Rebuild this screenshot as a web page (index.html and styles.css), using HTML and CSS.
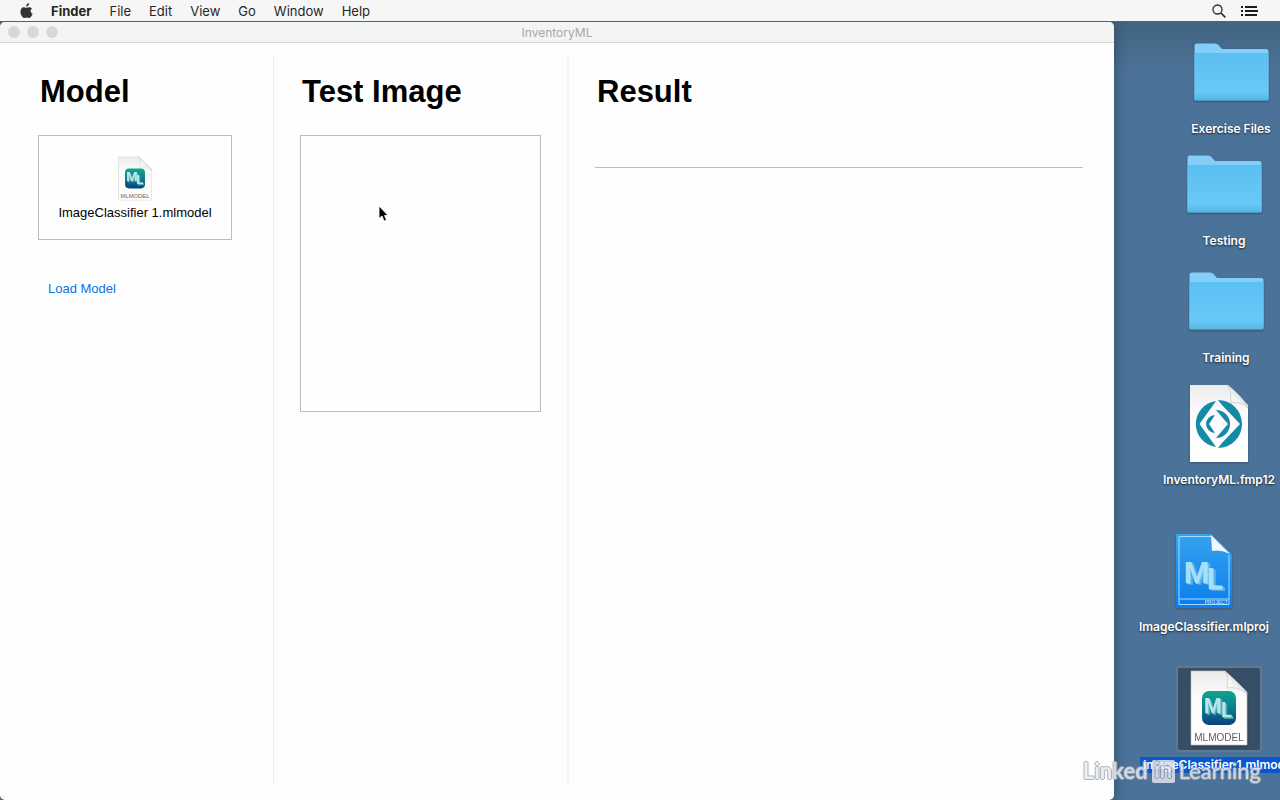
FILE: index.html
```
<!DOCTYPE html>
<html lang="en">
<head>
  <meta charset="UTF-8" />
  <meta name="viewport" content="width=device-width, initial-scale=1" />
  <title>InventoryML</title>

  <link rel="stylesheet" href="styles.css">
</head>
<body>

  <!-- Shared icon shapes -->
  <svg class="defs" width="0" height="0" aria-hidden="true">
    <defs>
      <linearGradient id="folder-front" x1="0" y1="0" x2="0" y2="1">
        <stop offset="0" stop-color="#5abff2" />
        <stop offset="0.8" stop-color="#68c9f8" />
        <stop offset="1" stop-color="#55b4de" />
      </linearGradient>
      <linearGradient id="paper" x1="0" y1="0" x2="0" y2="1">
        <stop offset="0" stop-color="#ececec" />
        <stop offset="0.35" stop-color="#fbfbfb" />
        <stop offset="1" stop-color="#ffffff" />
      </linearGradient>
      <linearGradient id="fold" x1="0" y1="1" x2="1" y2="0">
        <stop offset="0" stop-color="#ffffff" />
        <stop offset="0.4" stop-color="#f4f4f4" />
        <stop offset="0.7" stop-color="#cdd0d2" />
        <stop offset="1" stop-color="#f4f4f4" />
      </linearGradient>
      <linearGradient id="tile" x1="0" y1="0" x2="0" y2="1">
        <stop offset="0" stop-color="#10a58c" />
        <stop offset="0.5" stop-color="#0b7f91" />
        <stop offset="1" stop-color="#0b3f7c" />
      </linearGradient>
      <linearGradient id="project" x1="0" y1="0" x2="0" y2="1">
        <stop offset="0" stop-color="#36a3ee" />
        <stop offset="1" stop-color="#0a7df0" />
      </linearGradient>
    </defs>

    <symbol id="icon-folder" viewBox="0 0 75 60">
      <path d="M0.500 3Q0.500 0.500 3 0.500H21Q23 0.500 24.500 2L28 6H72Q74.500 6 74.500 8.500V56H0.500Z" fill="#83cffa" />
      <path d="M0.500 11Q0.500 10 2 10H73Q74.500 10 74.500 11V56.500Q74.500 58 73 58H2Q0.500 58 0.500 56.500Z" fill="url(#folder-front)" />
      <path d="M1 57.500H74" stroke="#4794bd" />
    </symbol>

    <symbol id="icon-page" viewBox="0 0 58 76">
      <path d="M1 1H35L57 22V75H1Z" fill="url(#paper)" stroke="#bfc3c6" stroke-width="0.700" />
      <path d="M35 1Q39 8 37 18Q48 16 57 24Q55 19 47 12Q41 6 35 1Z" fill="url(#fold)" stroke="#b4b7ba" stroke-width="0.500" />
      <rect x="12" y="21" width="34" height="34" rx="7" fill="url(#tile)" />
    </symbol>
  </svg>

  <!-- Menu bar -->
  <header class="menubar">
    <nav class="menus" aria-label="Menu bar">
      <button class="menu" aria-label="Apple menu">
        <svg width="13" height="16" viewBox="0 0 13 16">
          <path fill="#333" d="M9 0Q9.200 1.500 8.300 2.600Q7.400 3.700 6.200 3.600Q6 2.300 6.900 1.200Q7.700 0.200 9 0ZM12 5.400Q10.500 6.400 10.600 8.100Q10.700 10.100 12.600 10.900Q12.100 12.300 11.200 13.600Q10.300 15 9.200 15Q8.600 15 7.900 14.700Q6.700 14.200 5.500 14.700Q4.800 15 4.200 15Q3 15 1.700 12.900Q0.400 10.800 0.400 8.600Q0.400 6.600 1.400 5.400Q2.300 4.200 3.800 4.200Q4.500 4.200 5.300 4.500Q6.500 5 7.400 4.600Q8.400 4.200 9.200 4.200Q11 4.200 12 5.400Z" />
        </svg>
      </button>
      <button class="menu menu-app">Finder</button>
      <button class="menu">File</button>
      <button class="menu">Edit</button>
      <button class="menu">View</button>
      <button class="menu">Go</button>
      <button class="menu">Window</button>
      <button class="menu">Help</button>
    </nav>
    <div class="status">
      <button class="menu" aria-label="Search">
        <svg width="14" height="14" viewBox="0 0 14 14" fill="none" stroke="#2b2b2b" stroke-width="1.300">
          <circle cx="5.500" cy="5.500" r="4.500" />
          <path d="M9 9L13.300 13.300" stroke-width="1.700" />
        </svg>
      </button>
      <button class="menu" aria-label="Notifications">
        <svg width="17" height="12" viewBox="0 0 17 12" stroke="#1c1c1c" stroke-width="1.800">
          <path d="M0 2H2M4 2H16M0 6H2M4 6H17M0 10H2M4 10H16" />
        </svg>
      </button>
    </div>
  </header>

  <main class="desktop">

    <!-- App window -->
    <section class="window" aria-label="InventoryML">
      <div class="titlebar">
        <div class="lights"><span></span><span></span><span></span></div>
        <div class="title">InventoryML</div>
      </div>

      <div class="panels">
        <div class="panel panel-model">
          <h2>Model</h2>
          <div class="well model-well">
            <svg width="34" height="45" viewBox="0 0 58 76" aria-hidden="true">
              <use href="#icon-page" />
              <text class="ml-mark" x="14" y="43" font-size="22">M</text>
              <text class="ml-mark" x="31" y="47" font-size="22">L</text>
              <text class="doc-type" x="29" y="71" font-size="10" text-anchor="middle">MLMODEL</text>
            </svg>
            <span>ImageClassifier 1.mlmodel</span>
          </div>
          <button class="load">Load Model</button>
        </div>

        <div class="panel panel-test">
          <h2>Test Image</h2>
          <div class="well image-well"></div>
        </div>

        <div class="panel panel-result">
          <h2><label for="result">Result</label></h2>
          <input id="result" class="result" type="text" />
        </div>
      </div>
    </section>

    <!-- Desktop items -->
    <div class="item exercise">
      <div class="pic"><svg width="75" height="60"><use href="#icon-folder" /></svg></div>
      <span class="name">Exercise Files</span>
    </div>
    <div class="item testing">
      <div class="pic"><svg width="75" height="60"><use href="#icon-folder" /></svg></div>
      <span class="name">Testing</span>
    </div>
    <div class="item training">
      <div class="pic"><svg width="75" height="60"><use href="#icon-folder" /></svg></div>
      <span class="name">Training</span>
    </div>
    <div class="item inventory">
      <div class="pic">
        <svg width="60" height="78" viewBox="0 0 60 78">
          <path d="M1 0H39L59 20V77H1Z" fill="url(#paper)" />
          <path d="M39 0Q43 8 42 18Q52 16 59 23Q57 17 50 10Q44 4 39 0Z" fill="url(#fold)" stroke="#a9b1b6" stroke-width="0.500" />
          <g fill="#1489a8">
            <path d="M27 17A23.200 23.200 0 0 0 27 63L10.500 40Z" transform="translate(0 -1)" />
            <path d="M27 17L10.500 40L27 57L27 63Z" fill="none" />
            <path d="M29 15A24 24 0 0 1 29 63L33 58L51 39L33 20Z" />
            <path d="M27 25A14 14 0 0 1 27 53L39 39Z" />
            <path d="M26 30A9 9 0 0 0 26 48L20 39Z" />
          </g>
        </svg>
      </div>
      <span class="name">InventoryML.fmp12</span>
    </div>
    <div class="item project">
      <div class="pic">
        <svg width="58" height="76" viewBox="0 0 58 76">
          <path d="M1 1H36L57 21V75H1Z" fill="url(#project)" />
          <path d="M4 3.500H36M54 22V71.500H4V3.500M4 66H54" fill="none" stroke="#a6dcff" />
          <path d="M36 2L55 21Q46 16 37 18Z" fill="#f2f7fa" />
          <text class="ml-mark blue" x="9" y="50" font-size="29">M</text>
          <text class="ml-mark blue" x="32" y="56" font-size="29">L</text>
          <text class="project-type" x="53" y="71" font-size="5" text-anchor="end">PROJECT</text>
        </svg>
      </div>
      <span class="name">ImageClassifier.mlproj</span>
    </div>
    <div class="item model selected">
      <div class="pic">
        <svg width="58" height="76" viewBox="0 0 58 76">
          <use href="#icon-page" />
          <text class="ml-mark" x="14" y="43" font-size="20">M</text>
          <text class="ml-mark" x="31" y="47" font-size="20">L</text>
          <text class="doc-type" x="29" y="71" font-size="10" text-anchor="middle">MLMODEL</text>
        </svg>
      </div>
      <span class="name">ImageClassifier 1.mlmodel</span>
    </div>

    <!-- Watermark -->
    <div class="watermark">
      <span class="brand">Linked</span><span class="in">in</span><span>Learning</span>
    </div>
  </main>

  <!-- Mouse pointer -->
  <svg class="pointer" width="12" height="18" viewBox="0 0 12 18" aria-hidden="true">
    <path d="M1 1V13.500L4 11L6 16L8.500 15L6.500 10.500H10Z" fill="#000" stroke="#fff" stroke-width="0.800" />
  </svg>

</body>
</html>
```
FILE: styles.css
```
/* Reset and base */
* {
  margin: 0;
  padding: 0;
  box-sizing: border-box;
}

body {
  height: 100vh;
  display: flex;
  flex-direction: column;
  overflow: hidden;
  background: #4b7298;
  font-family: Inter, sans-serif;
  font-size: 13px;
}

button {
  border: 0;
  background: none;
  font: inherit;
}

.defs {
  position: absolute;
}

/* Menu bar */
.menubar {
  height: 22px;
  display: flex;
  justify-content: space-between;
  padding: 0 22px 0 20px;
  background: #f6f6f6;
  border-bottom: 1px solid #4c6672;
}

.menus,
.status {
  display: flex;
  align-items: center;
  gap: 18px;
}

.status {
  gap: 15px;
}

.menu {
  display: flex;
  color: #262626;
  line-height: 20px;
}

.menu-app {
  font-weight: 700;
}

/* Desktop */
.desktop {
  position: relative;
  flex: 1;
  display: flex;
  padding-right: 166px;
  overflow: hidden;
  background: linear-gradient(#426480, #4b7298 50px);
}

/* App window */
.window {
  flex: 1;
  display: flex;
  flex-direction: column;
  background: #fefefe;
  border-radius: 5px;
  box-shadow: 0 2px 14px rgba(0,0,0,0.35);
  overflow: hidden;
}

.titlebar {
  position: relative;
  height: 21px;
  display: flex;
  align-items: center;
  justify-content: center;
  background: #f3f4f4;
  border-bottom: 1px solid #d9d9d9;
}

.lights {
  position: absolute;
  left: 8px;
  display: flex;
  gap: 7px;
}

.lights span {
  width: 12px;
  height: 12px;
  border-radius: 50%;
  background: #d8d8d8;
}

.title {
  color: #a8a8a8;
  font-size: 12px;
}

.panels {
  flex: 1;
  display: grid;
  grid-template-columns: 274px 295px 1fr;
  padding: 14px 0 17px;
  font-family: "Liberation Sans", Arial, sans-serif;
}

.panel {
  padding: 17px 26px 0;
}

.panel-model {
  padding-left: 38px;
  padding-right: 41px;
  border-right: 1px solid #ececec;
}

.panel-test {
  border-right: 2px solid #f4f4f4;
}

.panel-result {
  padding-right: 31px;
}

.panel h2 {
  padding-left: 2px;
  margin-bottom: 25px;
  font-size: 31px;
  line-height: 36px;
}

.well {
  border: 1px solid #bdbdbd;
}

.model-well {
  height: 105px;
  display: flex;
  flex-direction: column;
  align-items: center;
  justify-content: center;
  gap: 4px;
}

.load {
  margin: 40px 0 0 10px;
  color: #0a74e6;
  line-height: 18px;
}

.image-well {
  height: 277px;
}

.result {
  display: block;
  width: 100%;
  height: 33px;
  border: 0;
  border-bottom: 1px solid #bdbdbd;
  background: none;
  font: inherit;
  outline: 0;
}

/* Desktop items */
.item {
  position: absolute;
  width: 158px;
  display: flex;
  flex-direction: column;
  align-items: center;
  gap: 5px;
}

.exercise  { top: 8px; right: -30px; }
.testing   { top: 120px; right: -23px; }
.training  { top: 237px; right: -25px; }
.inventory { top: 359px; right: -18px; }
.project   { top: 506px; right: -3px; }
.model     { top: 644px; right: -18px; }

.pic {
  width: 86px;
  height: 86px;
  display: flex;
  align-items: center;
  justify-content: center;
}

.pic svg {
  filter: drop-shadow(0 1px 1px rgba(0,0,0,0.25));
}

.name {
  color: #fff;
  font-size: 12px;
  font-weight: 600;
  line-height: 16px;
  white-space: nowrap;
  text-shadow: 0 1px 2px rgba(0,0,0,0.7);
}

.selected .pic {
  padding-bottom: 2px;
  border: 2px solid #63798a;
  border-radius: 4px;
  background: #354f66;
}

.selected .name {
  align-self: flex-start;
  padding: 0 3px;
  background: #0b57d0;
  text-shadow: none;
}

/* Letters with a stepped side, like extruded blocks */
.ml-mark {
  fill: #b9e6ea;
  font-family: Roboto, sans-serif;
  font-weight: 700;
  filter: drop-shadow(1px 1px 0 #68bdc5) drop-shadow(1px 1px 0 #3fa5ab);
}

.ml-mark.blue {
  fill: #a5e0fa;
  filter: drop-shadow(1px 1px 0 #7ccaf5) drop-shadow(2px 1px 0 #4fa9e8);
}

.doc-type {
  fill: #5f5f5f;
  font-family: "Liberation Sans", Arial, sans-serif;
}

.project-type {
  fill: #c4e8ff;
  font-family: "Liberation Sans", Arial, sans-serif;
}

/* Watermark */
.watermark {
  position: absolute;
  right: 19px;
  bottom: 16px;
  display: flex;
  align-items: center;
  gap: 4px;
  color: #e9edf2;
  font-family: Lato, sans-serif;
  font-size: 22px;
  line-height: 26px;
  text-shadow: 1px 0 #9aa3ad, -1px 0 #9aa3ad, 0 1px #9aa3ad, 0 -1px #9aa3ad;
  opacity: 0.85;
}

.brand {
  font-weight: 700;
}

.in {
  width: 23px;
  height: 23px;
  border-radius: 2px;
  background: #dfe5ee;
  font-weight: 700;
  line-height: 20px;
  text-align: center;
}

/* Mouse pointer */
.pointer {
  position: absolute;
  left: 378px;
  top: 205px;
}
```
